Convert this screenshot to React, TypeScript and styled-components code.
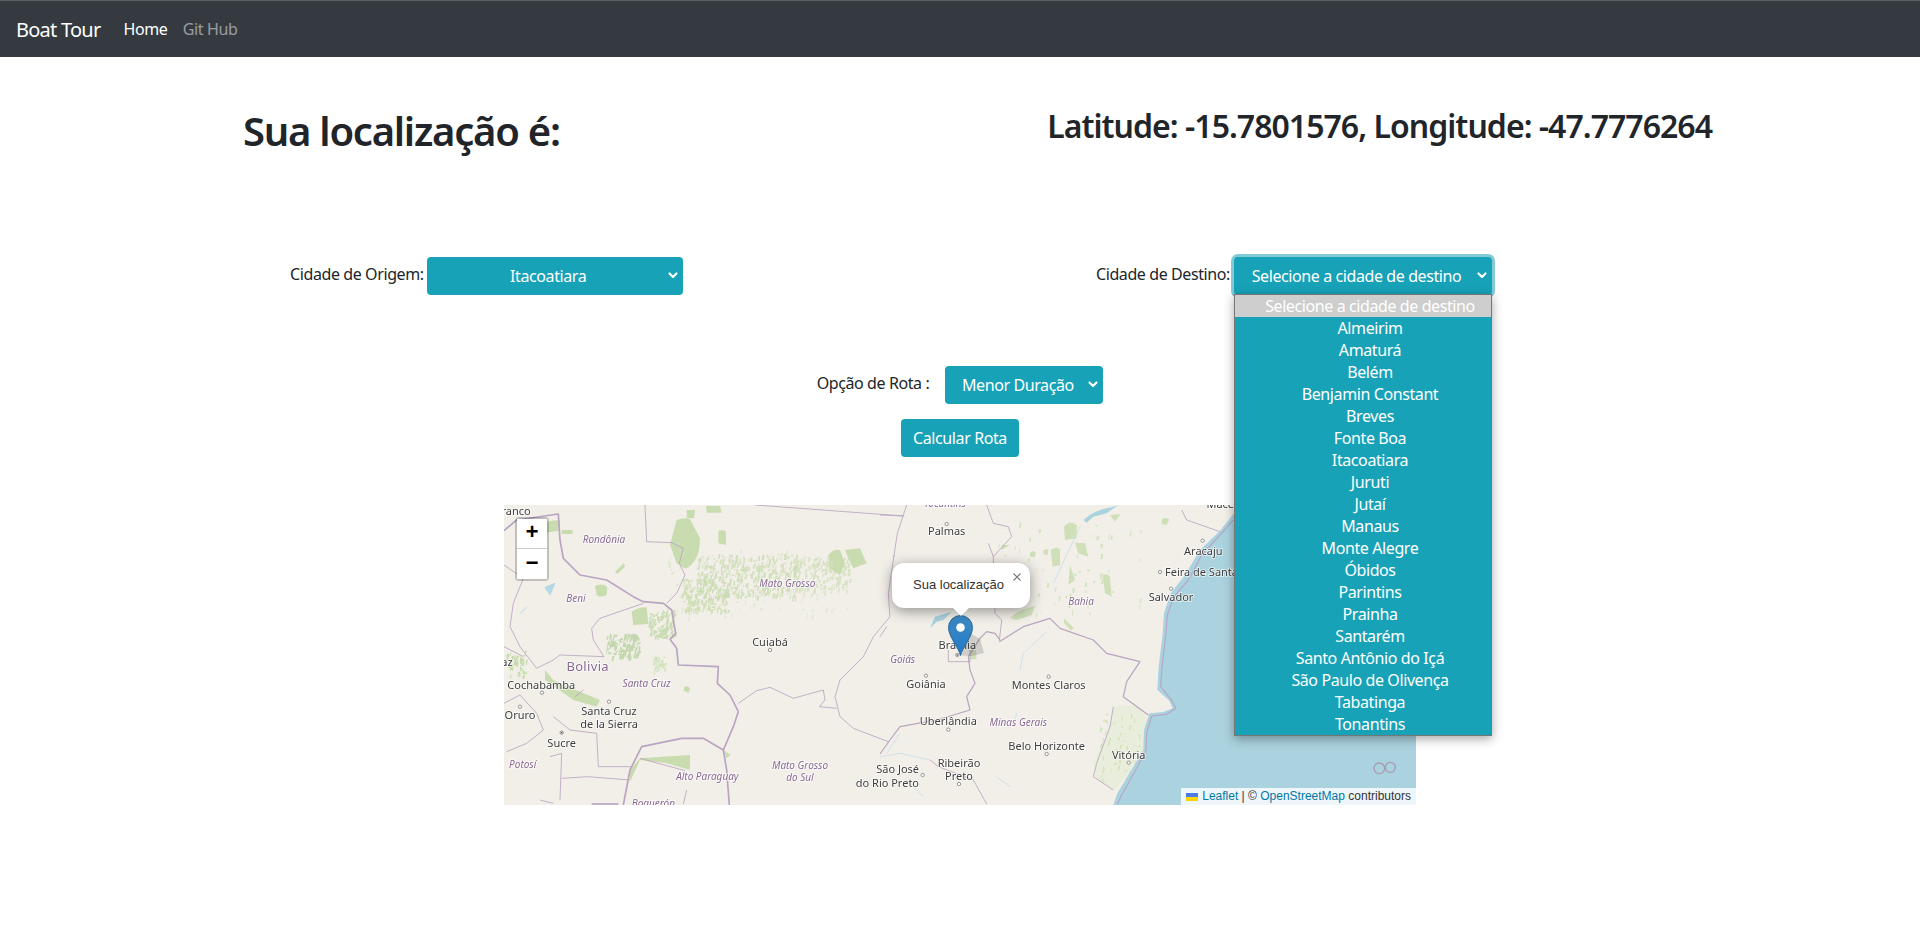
import React from 'react';
import styled, { createGlobalStyle } from 'styled-components';

const GlobalStyle = createGlobalStyle`
  html, body { margin: 0; padding: 0; background: #fff; }
  body { font-family: "Noto Sans", "Open Sans", sans-serif; font-size: 16px; color: #212529; }
`;

const Page = styled.div`display: flex; flex-direction: column; min-height: 931px;`;
const NavBar = styled.nav`
  display: flex; align-items: center; height: 56px; padding: 0 16px;
  background: #343a40; border-top: 1px solid #5c5f63;
`;
const Brand = styled.a`color: #fff; font-size: 20px; letter-spacing: -0.75px; margin-right: 23px;`;
const NavLink = styled.a<{ $active?: boolean }>`
  color: ${p => (p.$active ? '#fff' : 'rgba(255,255,255,.5)')};
  font-size: 16px; letter-spacing: -0.4px; margin-right: 15.5px;
`;
const HeadingRow = styled.div`
  display: flex; justify-content: space-between; align-items: flex-start;
  padding: 45px 208px 0 243px; height: 200px; box-sizing: border-box;
`;
const Title = styled.h1`margin: 5px 0 0; font-size: 40px; line-height: 48px; font-weight: 600; letter-spacing: -1.25px;`;
const Coords = styled.h2`margin: 0; font-size: 32px; line-height: 48px; font-weight: 600; letter-spacing: -0.97px;`;
const CityRow = styled.div`
  display: flex; justify-content: space-between; padding: 0 428px 0 290px; height: 109px;
`;
const Field = styled.div`display: flex; align-items: flex-start; height: 38px;`;
const FieldLabel = styled.label<{ $gap: number }>`
  font-size: 16px; line-height: 24px; letter-spacing: -0.4px; margin-right: ${p => p.$gap}px; padding-top: 5px; white-space: nowrap;
`;
const SelectBox = styled.div<{ $w: number; $focus?: boolean }>`
  position: relative; width: ${p => p.$w}px; height: 38px; box-sizing: border-box;
  padding: 0 31px 0 18px; display: flex; align-items: center; justify-content: center;
  background: #17a2b8; color: #fff; border-radius: 4px; font-size: 16px; letter-spacing: -0.4px;
  white-space: nowrap; flex: none;
  ${p => (p.$focus ? 'box-shadow: 0 0 0 3px #80cbd7;' : '')}
`;
const Chevron = styled.svg`position: absolute; right: 3px; top: 13px;`;
const OptionList = styled.div`
  position: absolute; z-index: 5; left: 0; top: 37px; width: 258px; box-sizing: border-box;
  border: 1px solid #767676; background: #17a2b8; box-shadow: 0 3px 10px rgba(0,0,0,.35);
`;
const OptionItem = styled.div<{ $selected?: boolean }>`
  height: 22px; line-height: 22px; padding-left: 14px; text-align: center; color: #fff;
  background: ${p => (p.$selected ? '#cecece' : 'transparent')};
`;
const RouteRow = styled.div`display: flex; justify-content: center; height: 53px;`;
const ButtonRow = styled.div`display: flex; justify-content: center; height: 86px;`;
const CalcButton = styled.button`
  width: 118px; height: 38px; padding: 0; border: 0; border-radius: 4px; background: #17a2b8; color: #fff;
  font: inherit; letter-spacing: -0.4px;
`;
const MapFrame = styled.div`
  position: relative; width: 912px; height: 300px; margin: 0 auto; overflow: hidden; background: #f2efe9;
`;
const MapSvg = styled.svg`display: block; width: 912px; height: 300px; filter: blur(.4px);`;
const ZoomControl = styled.div`
  position: absolute; left: 11px; top: 12px; width: 30px; border: 2px solid rgba(0,0,0,.2); border-radius: 4px; background-clip: padding-box;
`;
const ZoomButton = styled.div<{ $last?: boolean }>`
  height: ${p => (p.$last ? 30 : 29)}px; display: flex; align-items: center; justify-content: center; background: #fff; color: #000;
  ${p => (p.$last ? '' : 'border-bottom: 1px solid #ccc;')}
  font: bold 22px "Liberation Mono", monospace;
`;
const Popup = styled.div`
  position: absolute; left: 388px; top: 58px; width: 138px; height: 45px; box-sizing: border-box; padding: 13px 0 0 21px;
  background: #fff; border-radius: 12px; box-shadow: 0 3px 14px rgba(0,0,0,.4);
  font: 13px/18px "Liberation Sans", Arial, sans-serif; color: #333;
`;
const PopupTip = styled.div`
  position: absolute; left: 59px; top: 44px; width: 20px; height: 10px; overflow: hidden;
  &::after { content: ""; display: block; width: 14px; height: 14px; margin: -8px 0 0 3px; background: #fff; transform: rotate(45deg); }
`;
const PopupClose = styled.svg`position: absolute; right: 8px; top: 9px;`;
const Marker = styled.svg`position: absolute; left: 444px; top: 110px; overflow: visible;`;
const Attribution = styled.div`
  position: absolute; right: 0; bottom: 0; height: 17px; padding: 0 5px; background: rgba(255,255,255,.8);
  font: 12px/17px "Liberation Sans", Arial, sans-serif; color: #333; white-space: nowrap; display: flex; align-items: center;
`;
const AttrLink = styled.a`color: #0078a8;`;
const Flag = styled.svg`margin-right: 4px;`;

const PlaceText = styled.text<{ $kind: 'city' | 'region' | 'country' }>`
  font-family: "Noto Sans", sans-serif;
  font-size: ${p => (p.$kind === 'country' ? 39 : p.$kind === 'region' ? 30 : 33)}px;
  font-style: ${p => (p.$kind === 'region' ? 'italic' : 'normal')};
  fill: ${p => (p.$kind === 'city' ? '#3d3d3d' : '#8a6a92')};
  letter-spacing: ${p => (p.$kind === 'country' ? 1 : 0)}px;
  paint-order: stroke; stroke: rgba(255,255,255,.75); stroke-width: 5px;
`;

const CITIES = ['Selecione a cidade de destino','Almeirim','Amaturá','Belém','Benjamin Constant','Breves','Fonte Boa','Itacoatiara','Juruti','Jutaí','Manaus','Monte Alegre','Óbidos','Parintins','Prainha','Santarém','Santo Antônio do Içá','São Paulo de Olivença','Tabatinga','Tonantins'];

type L = [string, number, number, 'city'|'region'|'country', ('start'|'middle'|'end')?];
const LEFT_LABELS: L[] = [
  ['Branco',92,45,'city','end'],['Rondônia',312,128,'region'],['Beni',228,306,'region'],['Mato Grosso',862,261,'region'],
  ['Bolivia',263,512,'country'],['Santa Cruz',440,562,'region'],['Cuiabá',810,438,'city'],['Paz',38,498,'city','end'],
  ['Cochabamba',124,566,'city'],['Oruro',60,657,'city'],['Sucre',185,741,'city'],['Santa Cruz',327,644,'city'],['de la Sierra',327,685,'city'],
  ['Potosí',68,803,'region'],['Alto Paraguay',622,840,'region'],['Mato Grosso',900,808,'region'],['do Sul',900,844,'region'],['Boquerón',460,922,'region'],
];
const RIGHT_LABELS: L[] = [
  ['Tocantins',195,22,'region'],['Palmas',200,106,'city'],['Brasília',232,446,'city'],['Goiás',68,489,'region'],['Goiânia',138,565,'city'],
  ['Montes Claros',506,568,'city'],['Bahia',603,314,'region'],['Aracaju',970,166,'city'],['Feira de Santana',855,228,'city','start'],['Salvador',873,304,'city'],
  ['Uberlândia',205,676,'city'],['Minas Gerais',415,679,'region'],['Belo Horizonte',500,749,'city'],['Vitória',746,778,'city'],
  ['Ribeirão',237,800,'city'],['Preto',237,841,'city'],['São José',117,819,'city','end'],['do Rio Preto',117,861,'city','end'],['Maceió',1035,24,'city'],
];
const LEFT_DOTS = [[810,450],[126,578],[60,620],[327,605],[185,698]];
const RIGHT_DOTS = [[200,72],[232,465],[138,527],[506,530],[968,122],[840,216],[873,266],[205,689],[500,762],[746,788],[237,852],[128,825]];

const GREEN_L = [
  'M530 60 Q555 50 570 58 L600 115 Q600 150 590 172 Q575 200 556 206 L530 190 L510 135 Z','M285 258 Q310 248 322 262 L320 285 Q300 295 290 285 Z','M395 335 Q420 320 440 322 L445 372 L400 375 Z',
  'M130 70 Q160 58 180 62 L175 92 L140 98 Z','M185 90 L218 90 L218 102 L185 102 Z','M618 18 L660 18 L665 38 L620 38 Z','M655 92 Q670 88 678 95 L678 135 L655 130 Z','M985 165 Q1000 145 1020 150 L1035 190 L1020 225 L990 205 Z',
  'M1035 150 L1080 145 L1100 190 L1060 205 L1045 175 Z','M345 215 L372 190 L375 200 L352 222 Z','M560 30 L585 30 L582 55 L560 55 Z','M135 510 L160 540 L215 565 L300 600 L290 620 L220 600 L135 540 Z','M390 810 L420 775 L570 765 L570 810 L500 790 L420 780 L390 845 Z',
  'M670 750 L692 765 L680 775 Z','M552 562 Q565 555 570 565 L566 578 L552 572 Z',
];
const GREEN_R = [
  'M552 80 Q565 60 590 75 L590 115 L555 120 Z','M512 150 Q528 138 540 148 L540 195 L518 200 Z','M585 128 L615 130 L625 170 L595 160 Z','M668 225 Q685 220 690 232 L695 290 L675 280 Z',
  'M390 355 Q410 330 465 318 L455 345 L410 360 Z','M270 450 L288 450 L290 478 L270 478 Z','M450 158 Q460 150 468 158 L464 172 L450 170 Z','M490 150 L505 148 L503 165 L490 163 Z',
  'M845 58 Q858 50 868 58 L860 75 L845 72 Z','M690 45 L722 42 L705 65 Z','M570 195 L585 240 L565 255 Z','M552 355 L582 385 L572 392 L552 368 Z','M365 135 L390 135 L365 150 Z',
];

function speckles(seed: number, x0: number, y0: number, w: number, h: number, n: number) {
  let s = seed * 4099; const r = () => { s = (s * 16807) % 2147483647; return s / 2147483647; };
  const out: string[] = [];
  for (let i = 0; i < n; i++) {
    const x = x0 + r() * w, y = y0 + r() * h, a = 2 + r() * 5, b = 3 + r() * 14;
    out.push(`M${x.toFixed(0)} ${y.toFixed(0)}h${a.toFixed(0)}l-2 ${b.toFixed(0)}h${(-a).toFixed(0)}z`);
  }
  return out.join('');
}

const WATER = 'M1060 42 L1020 92 L960 150 L915 225 L872 280 L852 340 L848 400 L836 500 L832 570 L868 602 L878 625 L850 636 L808 640 L792 690 L790 750 L760 800 L712 880 L700 915 L1700 915 L1700 0 L1090 0 Z';
const BORDER = '#b8a3bf';

const MapArt = () => (
  <MapSvg viewBox="0 0 912 300">
    <rect width="912" height="300" fill="#f2efe9" />
    <g transform="translate(-4 -5) scale(.33333)">
      {GREEN_L.map((d, i) => <path key={i} d={d} fill="#c9dcb0" />)}
      <path d={speckles(77, 590, 160, 300, 130, 420)} fill="#c4d9aa" opacity=".7" />
      <path d={speckles(78, 545, 235, 140, 100, 200)} fill="#c4d9aa" opacity=".75" />
      <path d={speckles(79, 880, 170, 170, 100, 200)} fill="#c9dcb0" opacity=".65" />
      <path d={speckles(81, 500, 150, 560, 200, 120)} fill="#d5e5c0" opacity=".7" />
      <path d={speckles(91, 320, 400, 100, 70, 150)} fill="#b8d2a0" opacity=".8" />
      <path d={speckles(13, 445, 330, 80, 80, 110)} fill="#c4d9aa" opacity=".85" />
      <path d={speckles(29, 20, 450, 60, 80, 50)} fill="#c3d9a8" />
      <path d={speckles(37, 460, 470, 40, 40, 30)} fill="#d2e3bd" />
      <path d="M135 262 L165 250 L150 285 Z M60 340 L80 322" fill="#b5d8e6" stroke="#b5d8e6" strokeWidth="3" />
      <g fill="none" stroke={BORDER} strokeLinejoin="round">
        <g strokeWidth="2.5">
          <path d="M435 15 L440 125 L515 128 L550 145 L538 190 L555 225 L530 280 L500 310" />
          <path d="M12 195 L70 235 L40 310 L30 380 L60 440 L110 505 L160 480 L180 465 L312 470 L280 420 L275 385 L300 355 L430 310" />
          <path d="M1220 15 L1192 100 L1165 280 L1170 350 L1120 410 L1090 470 L1020 540 L1005 590 L1020 650 L1060 685 L1165 725" />
          <path d="M715 610 L770 572 L810 562 L880 595 L970 570 L975 600 L958 620 L1010 625" />
          <path d="M765 15 L1210 48" />
          <path d="M290 700 L295 800 L392 800 M185 835 L262 830 L390 840 M420 775 L555 812 M560 870 L550 912" />
          <path d="M12 610 L60 585 L110 640 L130 690 L80 730 L20 755 M160 650 L210 690 L290 700 M150 770 L185 760 L180 900 M120 900 L160 910" />
          <path d="M12 440 L70 470 M225 590 L250 570" />
        </g>
        <g strokeWidth="5" stroke="#b9a4c2">
          <path d="M12 92 L50 60 L175 42 L180 120 L190 175 L240 225 L320 240 L400 290 L430 305 L490 310 L515 330 L527 400 L510 418 L530 445 L535 495 L655 500 L652 550 L690 585 L715 635 L700 680 L670 750 L680 810 L688 915" />
          <path d="M670 750 L610 715 L545 715 L425 740 L390 810 L370 915" />
          <path d="M275 912 L355 912" />
        </g>
      </g>
      {LEFT_DOTS.map(([x, y], i) => <circle key={i} cx={x} cy={y} r="5" fill="#fff" stroke="#666" strokeWidth="2" />)}
      <circle cx="185" cy="698" r="2.5" fill="#555" />
      {LEFT_LABELS.map(([t, x, y, k, a], i) => <PlaceText key={i} x={x} y={y} $kind={k} textAnchor={a || 'middle'}>{t}</PlaceText>)}
    </g>
    <g transform="translate(376 -5) scale(.33333)">
      <path d="M700 620 L760 615 L800 645 L790 750 L750 810 L705 870 L650 840 L640 790 L690 680 Z" fill="#e6eed8" opacity=".8" />
      {GREEN_R.map((d, i) => <path key={i} d={d} fill="#cfe0b8" />)}
      <path d={speckles(55, 350, 60, 440, 280, 60)} fill="#d5e5c0" />
      <path d={speckles(63, 660, 640, 130, 200, 60)} fill="#d3e5bd" />
      <path d={WATER} fill="#aad3df" />
      <path d="M610 60 Q640 30 700 20 L715 15 L680 40 L640 50 L620 68 Z M150 385 L165 350 L215 335 L190 360 L170 365 Z" fill="#aad3df" />
      <g fill="none" stroke="#c6dde8" strokeWidth="2.5">
        <path d="M0 770 L60 760 L150 780 M60 700 L20 760 M420 510 L430 460 L500 395 M520 250 L600 80 M410 640 L400 680 M350 830 L390 860 M100 860 L130 890" />
      </g>
      <g fill="none" stroke={BORDER} strokeLinejoin="round" strokeWidth="2.5">
        <path d="M0 45 L70 48 M320 15 L340 70 L385 80 L395 110 L340 170 L325 130 M340 170 L345 340 L365 360 L358 422" />
        <path d="M358 425 L430 380 L510 355 L540 385 L640 420 L680 460 L780 485 L740 545 L730 590 L805 645" strokeWidth="3.5" />
        <path d="M360 420 L345 400 L320 395 L300 415 L265 470 L270 510 L285 550 L260 590 L270 630 L170 660 L60 680 L30 720 L0 762" strokeWidth="3.5" />
        <path d="M205 450 L205 485 L270 485 L270 450" />
        <path d="M150 780 L175 800 L280 840 L320 912 M905 30 L920 60 L1020 95 M700 620 L690 680 L650 790 L640 830 L700 870 M40 170 L45 165 M0 410 L20 380" />
        <path d="M1060 60 L1020 105 L965 165 L925 240 L882 290 L862 345 L858 400 L846 500 L842 560 L873 598 L888 625 L860 643 L815 648 L800 700 L798 750 L770 805 L725 885 L712 912" strokeWidth="3.5" stroke="#b7a6c5" />
      </g>
      {RIGHT_DOTS.map(([x, y], i) => <circle key={i} cx={x} cy={y} r="5" fill="#fff" stroke="#666" strokeWidth="2" />)}
      <circle cx="232" cy="465" r="2.5" fill="#555" />
      {RIGHT_LABELS.map(([t, x, y, k, a], i) => <PlaceText key={i} x={x} y={y} $kind={k} textAnchor={a || 'middle'}>{t}</PlaceText>)}
    </g>
    <g transform="translate(556 15) scale(.33333)" fill="none" stroke="#a99bb8" strokeWidth="4">
      <circle cx="958" cy="745" r="16" />
      <circle cx="991" cy="742" r="15" />
    </g>
  </MapSvg>
);

const ChevronIcon = () => (
  <Chevron width="14" height="12" viewBox="1 2 14 12" fill="none">
    <path d="M4.5 5.5L8 9l3.5-3.5" stroke="#fff" strokeWidth="2.2" strokeLinecap="round" strokeLinejoin="round" />
  </Chevron>
);

export default function App() {
  return (
    <Page>
      <GlobalStyle />
      <NavBar>
        <Brand>Boat Tour</Brand>
        <NavLink $active>Home</NavLink>
        <NavLink>Git Hub</NavLink>
      </NavBar>
      <HeadingRow>
        <Title>Sua localização é:</Title>
        <Coords>Latitude: -15.7801576, Longitude: -47.7776264</Coords>
      </HeadingRow>
      <CityRow>
        <Field>
          <FieldLabel $gap={3}>Cidade de Origem:</FieldLabel>
          <SelectBox $w={256}>Itacoatiara<ChevronIcon /></SelectBox>
        </Field>
        <Field>
          <FieldLabel $gap={4}>Cidade de Destino:</FieldLabel>
          <SelectBox $w={258} $focus>
            Selecione a cidade de destino
            <ChevronIcon />
            <OptionList>
              {CITIES.map((c, i) => <OptionItem key={c} $selected={i === 0}>{c}</OptionItem>)}
            </OptionList>
          </SelectBox>
        </Field>
      </CityRow>
      <RouteRow>
        <Field>
          <FieldLabel $gap={16}>Opção de Rota :</FieldLabel>
          <SelectBox $w={158}>Menor Duração<ChevronIcon /></SelectBox>
        </Field>
      </RouteRow>
      <ButtonRow><CalcButton>Calcular Rota</CalcButton></ButtonRow>
      <MapFrame>
        <MapArt />
        <ZoomControl>
          <ZoomButton>+</ZoomButton>
          <ZoomButton $last>−</ZoomButton>
        </ZoomControl>
        <Marker width="25" height="41" viewBox="0 0 25 41">
          <defs>
            <linearGradient id="pin" x1="0" y1="0" x2="0" y2="1">
              <stop offset="0" stopColor="#3f8bc4" />
              <stop offset="1" stopColor="#2279c8" />
            </linearGradient>
          </defs>
          <path d="M12.5 40.5 L22 18 L32 24 L36 38 L24 41 Z" fill="#000" opacity=".14" />
          <path d="M12.5 40.5 C11 33 .5 22 .5 12.5 A12 12 0 0 1 24.5 12.5 C24.5 22 14 33 12.5 40.5 Z" fill="url(#pin)" stroke="#2e6c97" strokeWidth="1" />
          <circle cx="12.5" cy="12.5" r="4.3" fill="#fff" />
        </Marker>
        <Popup>
          Sua localização
          <PopupTip />
          <PopupClose width="10" height="10" viewBox="0 0 10 10"><path d="M1.5 1.5l7 7M8.5 1.5l-7 7" stroke="#757575" strokeWidth="1.1" /></PopupClose>
        </Popup>
        <Attribution>
          <Flag width="12" height="8" viewBox="0 0 12 8"><rect width="12" height="4" fill="#4C7BE1" /><rect y="4" width="12" height="4" fill="#FFD500" /></Flag>
          <AttrLink>Leaflet</AttrLink>&nbsp;|&nbsp;©&nbsp;<AttrLink>OpenStreetMap</AttrLink>&nbsp;contributors
        </Attribution>
      </MapFrame>
    </Page>
  );
}
